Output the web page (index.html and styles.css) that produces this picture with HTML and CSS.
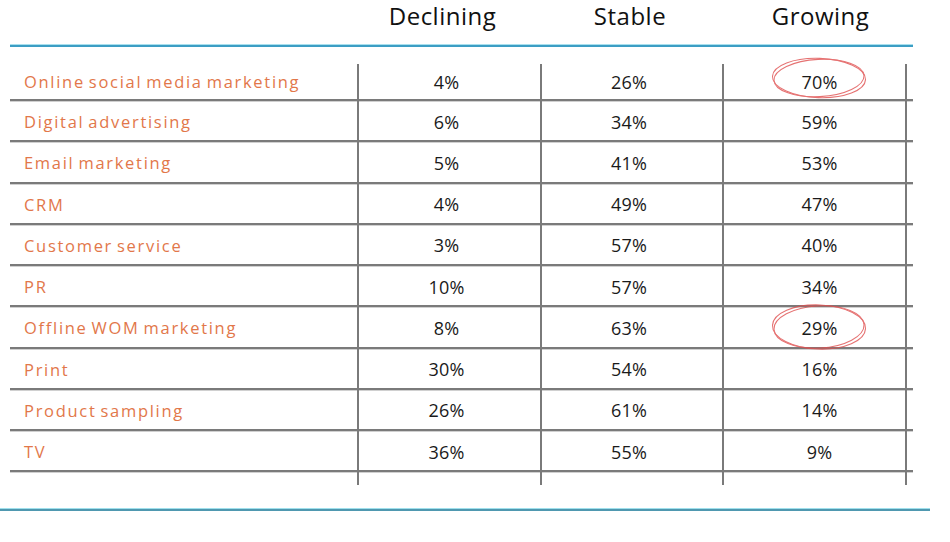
FILE: index.html
```html
<!DOCTYPE html>
<html>
<head>
<meta charset="utf-8">
<link rel="stylesheet" href="styles.css">
</head>
<body>
<div class="page">
  <div class="head">
    <div class="h-label"></div>
    <div class="h-col h-dec">Declining</div>
    <div class="h-col h-sta">Stable</div>
    <div class="h-col h-gro">Growing</div>
  </div>
  <div class="rule-top"></div>
  <div class="grid">
    <div class="lab sp"></div><div class="num sp"></div><div class="num sp"></div><div class="num sp"></div><div class="tail sp"></div>

    <div class="lab r first">Online social media marketing</div><div class="num r first">4%</div><div class="num r first">26%</div><div class="num r first gro"><span class="circled">70%<svg class="ring" viewBox="0 0 100 44"><ellipse cx="50" cy="22" rx="46" ry="19" transform="rotate(-3 50 22)"/><ellipse cx="50" cy="22" rx="47.5" ry="20" transform="rotate(2 50 22)"/></svg></span></div><div class="tail r first"></div>

    <div class="lab r">Digital advertising</div><div class="num r">6%</div><div class="num r">34%</div><div class="num r gro">59%</div><div class="tail r"></div>

    <div class="lab r">Email marketing</div><div class="num r">5%</div><div class="num r">41%</div><div class="num r gro">53%</div><div class="tail r"></div>

    <div class="lab r">CRM</div><div class="num r">4%</div><div class="num r">49%</div><div class="num r gro">47%</div><div class="tail r"></div>

    <div class="lab r">Customer service</div><div class="num r">3%</div><div class="num r">57%</div><div class="num r gro">40%</div><div class="tail r"></div>

    <div class="lab r">PR</div><div class="num r">10%</div><div class="num r">57%</div><div class="num r gro">34%</div><div class="tail r"></div>

    <div class="lab r">Offline WOM marketing</div><div class="num r">8%</div><div class="num r">63%</div><div class="num r gro"><span class="circled">29%<svg class="ring ring2" viewBox="0 0 100 50"><ellipse cx="50" cy="25" rx="46" ry="21.5" transform="rotate(-3 50 25)"/><ellipse cx="50" cy="25" rx="47.5" ry="22.5" transform="rotate(2 50 25)"/></svg></span></div><div class="tail r"></div>

    <div class="lab r">Print</div><div class="num r">30%</div><div class="num r">54%</div><div class="num r gro">16%</div><div class="tail r"></div>

    <div class="lab r">Product sampling</div><div class="num r">26%</div><div class="num r">61%</div><div class="num r gro">14%</div><div class="tail r"></div>

    <div class="lab r">TV</div><div class="num r">36%</div><div class="num r">55%</div><div class="num r gro">9%</div><div class="tail r"></div>

    <div class="lab sp2"></div><div class="num sp2"></div><div class="num sp2"></div><div class="num sp2"></div><div class="tail sp2"></div>
  </div>
  <div class="rule-bottom"></div>
</div>
</body>
</html>
```

FILE: styles.css
```css
html, body {
  margin: 0;
  padding: 0;
  background: #ffffff;
}

.page {
  width: 950px;
  height: 542px;
  overflow: hidden;
  position: relative;
}

.head {
  display: grid;
  grid-template-columns: 357px 183px 182px 183px;
  height: 44px;
}

.h-col {
  font-family: "Open Sans", "DejaVu Sans", sans-serif;
  font-size: 24px;
  color: #111;
  text-align: center;
  line-height: 32px;
  letter-spacing: 0.5px;
}

.h-dec { padding-right: 12px; }
.h-sta { padding-right: 2px; }
.h-gro { padding-left: 14px; }

.rule-top {
  margin-left: 10px;
  width: 903px;
  height: 2px;
  background: #3c9ec4;
  border-top: 1px solid #a8e0ee;
}

.grid {
  margin-top: 17px;
  margin-left: 10px;
  display: grid;
  grid-template-columns: 347px 183px 182px 183px 8px;
  grid-template-rows: 0px 37px repeat(9, 41.25px) 13px;
}

.r {
  border-bottom: 2px solid #7a7a7a;
  box-shadow: 0 1px 0 #d0d0d0;
  display: flex;
  align-items: center;
  padding-top: 2px;
  box-sizing: border-box;
}

.r.first {
  padding-top: 0;
}

.num, .tail {
  border-left: 2px solid #7a7a7a;
}

.lab {
  font-family: "Open Sans", "DejaVu Sans", sans-serif;
  font-size: 16.5px;
  color: #e2774a;
  padding-left: 14px;
  letter-spacing: 1.7px;
  word-spacing: -2px;
}

.num {
  justify-content: center;
  font-family: "Open Sans", "DejaVu Sans", sans-serif;
  font-size: 18px;
  color: #1a1a1a;
  letter-spacing: 0.2px;
  padding-right: 6px;
}

.num.gro {
  padding-right: 0;
  padding-left: 10px;
}

.circled {
  position: relative;
  display: inline-block;
}

.ring {
  position: absolute;
  left: -31px;
  top: -15px;
  width: 98px;
  height: 46px;
  fill: none;
  stroke: #e05050;
  stroke-width: 1.1;
  opacity: 0.8;
}

.ring2 {
  top: -14px;
  height: 50px;
}

.rule-bottom {
  margin-top: 23px;
  width: 930px;
  height: 2px;
  background: #4f98b0;
  border-top: 1px solid #9fe0ec;
}
```
